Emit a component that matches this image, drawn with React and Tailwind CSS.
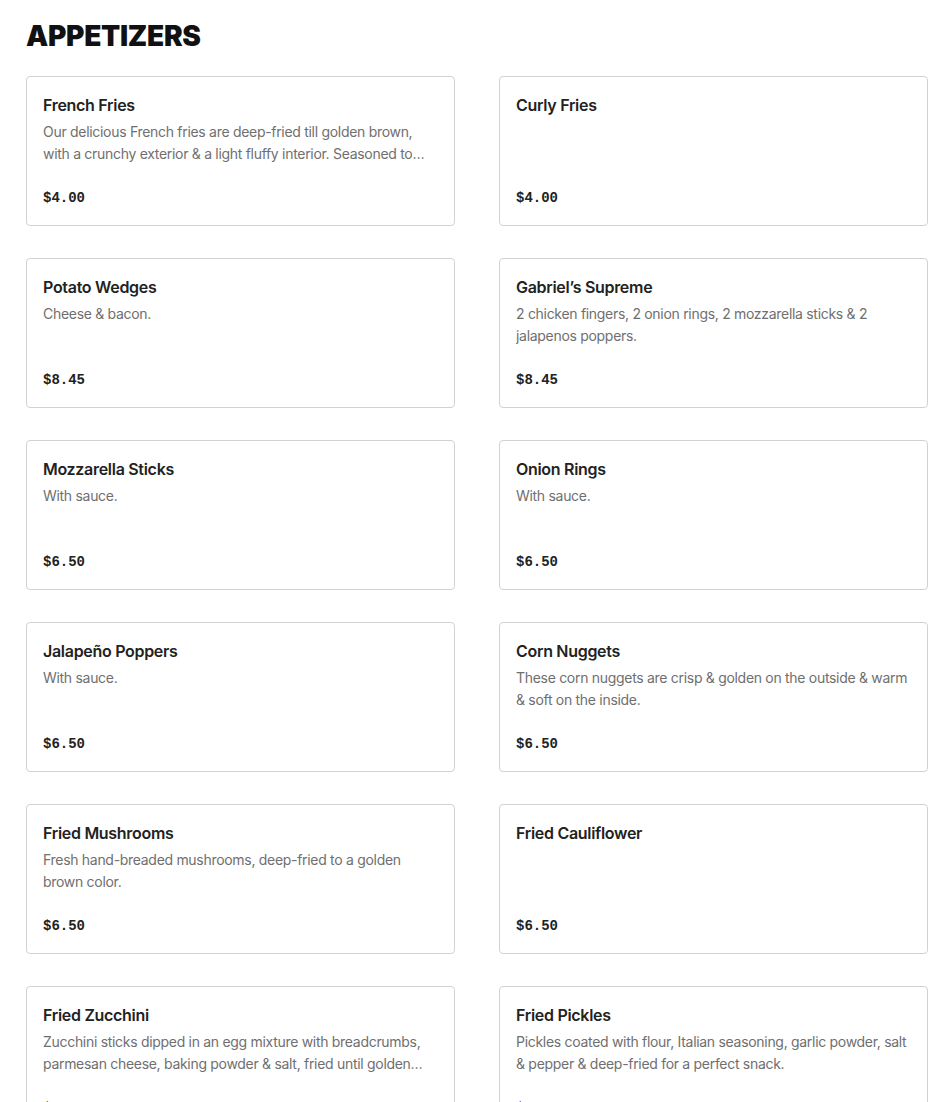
import React from 'react';

const items = [
  {
    name: 'French Fries',
    desc: 'Our delicious French fries are deep-fried till golden brown, with a crunchy exterior & a light fluffy interior. Seasoned to perfection with our house salt.',
    price: '$4.00',
  },
  { name: 'Curly Fries', desc: '', price: '$4.00' },
  { name: 'Potato Wedges', desc: 'Cheese & bacon.', price: '$8.45' },
  {
    name: 'Gabriel\u2019s Supreme',
    desc: '2 chicken fingers, 2 onion rings, 2 mozzarella sticks & 2 jalapenos poppers.',
    price: '$8.45',
  },
  { name: 'Mozzarella Sticks', desc: 'With sauce.', price: '$6.50' },
  { name: 'Onion Rings', desc: 'With sauce.', price: '$6.50' },
  { name: 'Jalapeño Poppers', desc: 'With sauce.', price: '$6.50' },
  {
    name: 'Corn Nuggets',
    desc: 'These corn nuggets are crisp & golden on the outside & warm & soft on the inside.',
    price: '$6.50',
  },
  {
    name: 'Fried Mushrooms',
    desc: 'Fresh hand-breaded mushrooms, deep-fried to a golden brown color.',
    price: '$6.50',
  },
  { name: 'Fried Cauliflower', desc: '', price: '$6.50' },
  {
    name: 'Fried Zucchini',
    desc: 'Zucchini sticks dipped in an egg mixture with breadcrumbs, parmesan cheese, baking powder & salt, fried until golden brown & crispy.',
    price: '$6.50',
  },
  {
    name: 'Fried Pickles',
    desc: 'Pickles coated with flour, Italian seasoning, garlic powder, salt & pepper & deep-fried for a perfect snack.',
    price: '$6.50',
  },
];

const MenuCard = ({ item }) => (
  <div className="h-[150px] rounded border border-[#d2d2d2] bg-white px-4 pt-4 pb-4 flex flex-col">
    <h3 className="text-[16px] leading-[24px] font-semibold tracking-[-0.3px] text-[#222]">{item.name}</h3>
    <p className="mt-1 h-[44px] text-[14px] leading-[22px] tracking-[-0.3px] text-[#6f6f6f] line-clamp-2">
      {item.desc}
    </p>
    <div className="mt-[23px] text-[14px] leading-[22px] font-bold text-[#222] font-['Liberation_Mono',monospace]">
      {item.price}
    </div>
  </div>
);

export default function App() {
  return (
    <div className="min-h-screen bg-white pt-5 pl-[26px] pr-[22px] pb-10 font-['Inter',sans-serif]">
      <h1 className="text-[28px] leading-[32px] font-black uppercase tracking-[-0.01em] text-[#111] mb-6">
        Appetizers
      </h1>
      <div className="grid grid-cols-2 gap-x-[44px] gap-y-8">
        {items.map((item) => (
          <MenuCard key={item.name} item={item} />
        ))}
      </div>
    </div>
  );
}
